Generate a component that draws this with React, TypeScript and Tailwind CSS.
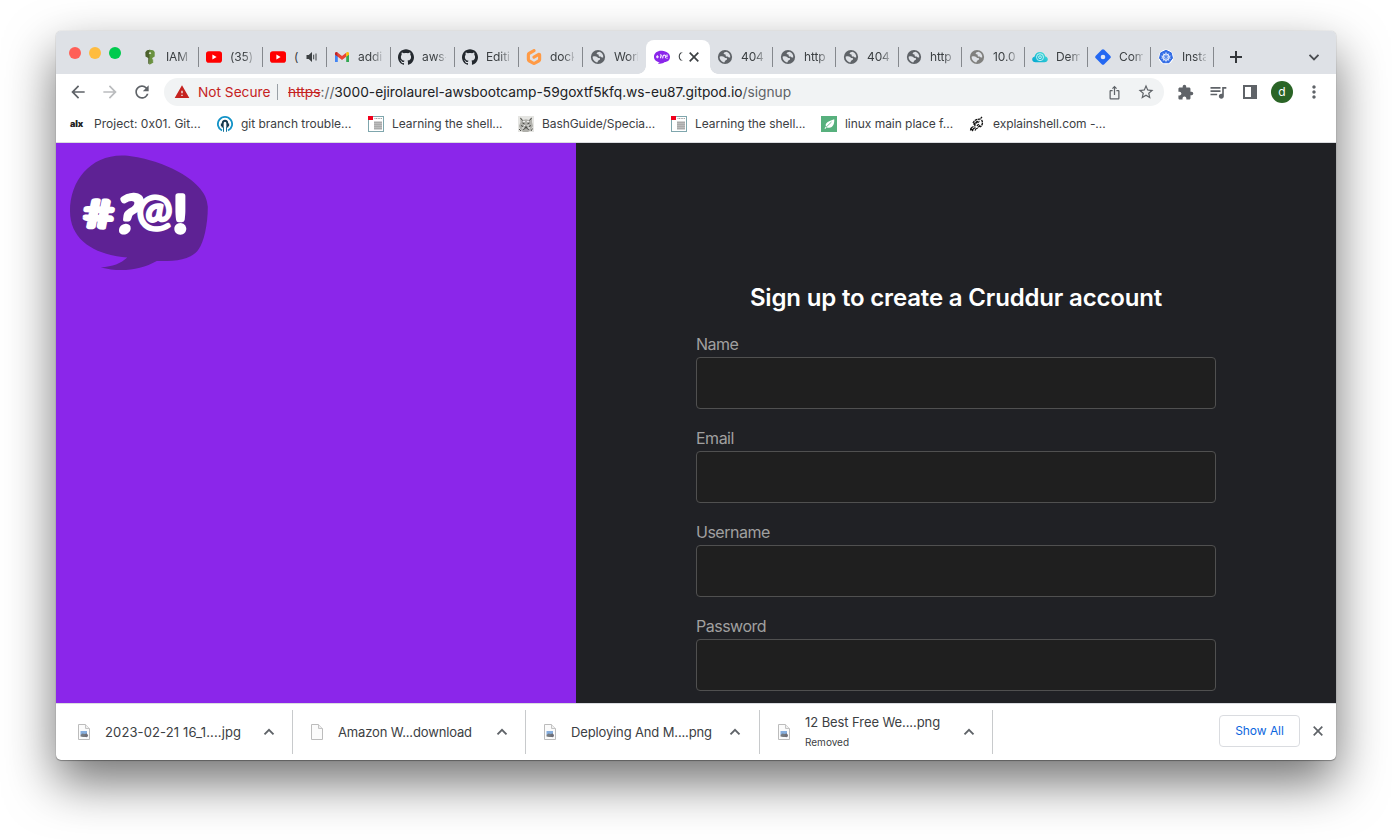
import React from "react";
import {
  MdArrowBack, MdArrowForward, MdRefresh, MdWarning, MdIosShare, MdStarBorder,
  MdExtension, MdQueueMusic, MdMoreVert,
} from "react-icons/md";
import { SiGithub, SiGitpod } from "react-icons/si";

type IconProps = { className?: string };

const Globe = ({ className = "text-[#5f6368]" }: IconProps) => (
  <svg viewBox="0 0 16 16" className={`size-4 ${className}`}>
    <circle cx="8" cy="8" r="7.100" fill="currentColor" />
    <path d="M2.600 7.800c1.500-.6 3.500-.6 4.500.2.600.5.700 1 1.700 1 .9 0 1.400.5 1.200 1.300-.2.800-1 .8-1.600 1.300-.6.600-.5 1.100-1.100 1.900C4.800 13.100 2.600 10.900 2.600 7.800z" fill="#dee1e6" />
    <path d="M9.300 2.800c-.9.200-2 .6-2.500 1.300-.4.600 0 1.100.7 1.200.9.100 1.200.5 1.200 1.100 0 .8.500 1.200 1.300 1.200.9 0 1 .6 1.800.8.500.1 1 0 1.500-.2C13.300 5.500 11.900 3.400 9.300 2.800z" fill="#dee1e6" />
  </svg>
);

const YouTube = () => (
  <svg viewBox="0 0 16 16" className="size-4">
    <rect x="0" y="2.300" width="16" height="11.400" rx="2.800" fill="#f00" />
    <path d="M6.400 5.600v4.800L10.600 8z" fill="#fff" />
  </svg>
);

const Gmail = () => (
  <svg viewBox="0 0 16 16" className="size-4">
    <path d="M1 5v8h2.800V7z" fill="#4285f4" />
    <path d="M15 5v8h-2.800V7z" fill="#34a853" />
    <path d="M3.800 3.800v4L8 11l4.200-3.200v-4L8 7z" fill="#ea4335" />
    <path d="M1 4.500v1.300l2.800 2V3.600C2.500 2.500 1 3 1 4.500z" fill="#c5221f" />
    <path d="M15 4.500v1.300l-2.800 2V3.600C13.500 2.500 15 3 15 4.500z" fill="#fbbc04" />
  </svg>
);

const IamKey = () => (
  <svg viewBox="0 0 16 16" className="size-4">
    <path d="M3.300 3.200 5 1.200 8 .8v8l-.4 6.700-1.400-1V9L3.500 7.400z" fill="#4b612c" />
    <path d="M7.500.8l3.700.5 1.500 1.700v4.500L10.300 9v1.200l1.300.9-1.100.9 1.100 1-1 1.100L8 15.500H7.500z" fill="#6a9140" />
    <path d="M6.700 4.200 8 3.100l1.300 1.100L8 5.200z" fill="#eef3e8" />
  </svg>
);

const ChatBubble = () => (
  <svg viewBox="0 0 16 16" className="size-4">
    <path d="M0 7.500C0 3.500 4 1.300 8 1.700c4.500.5 8 2.800 8 6.100 0 3.700-2.500 5-5.200 5.300-1.800 1.700-5 1.900-7 1.400l2-1.200C2.500 12.800-.2 10.800 0 7.500z" fill="#8b26ea" />
    <path d="M2 7.800h2.800M3.400 6.300v3M6 6c1.600-.5 1.600 1 .6 2v1.200M9 9.400c-.8-1.200.2-3.200 1.500-3.200s1.600 2 .7 2.800M13 5.500v2.800M13 9.300v.6" stroke="#f3e6ff" strokeWidth="1.200" fill="none" />
  </svg>
);

const Cloud = () => (
  <svg viewBox="0 0 16 16" className="size-4">
    <defs>
      <linearGradient id="cloud" x1="0" y1="1" x2="1" y2="0">
        <stop offset="0" stopColor="#00a5d0" />
        <stop offset="1" stopColor="#4fe3d8" />
      </linearGradient>
    </defs>
    <path d="M3.600 13.200C1.500 13.200.2 12 .2 10.500c0-1.500 1-2.500 2.400-2.900C3 5 5.200 3 8 3s4.900 1.900 5.300 4.600c1.500.3 2.500 1.400 2.500 2.900 0 1.600-1.400 2.700-3.400 2.700z" fill="url(#cloud)" />
    <circle cx="8" cy="8.200" r="3.500" fill="none" stroke="#e6f9fa" strokeWidth=".8" />
    <circle cx="8" cy="8.200" r="1.400" fill="none" stroke="#e6f9fa" strokeWidth=".8" />
  </svg>
);

const Diamond = () => (
  <svg viewBox="0 0 16 16" className="size-4">
    <rect x="2" y="2" width="12" height="12" rx="1.800" transform="rotate(45 8 8)" fill="#2468f2" />
    <circle cx="8" cy="8" r="2.300" fill="#dfe6f5" />
  </svg>
);

const Wheel = () => (
  <svg viewBox="0 0 16 16" className="size-4">
    <circle cx="8" cy="8" r="7.500" fill="#fff" />
    <path d="M8 1.300l5.200 2.500 1.300 5.400L11 13.700H5L1.500 9.200l1.300-5.400z" fill="#326ce5" stroke="#326ce5" strokeLinejoin="round" />
    <circle cx="8" cy="8.100" r="3.200" fill="none" stroke="#fff" strokeWidth="1" />
    <path d="M8 3v10.200M3.200 7l9.600 2.300M3.200 9.300 12.800 7M5 4.300l6 7.600M11 4.300 5 11.900" stroke="#fff" strokeWidth=".6" />
    <circle cx="8" cy="8.100" r="1" fill="#326ce5" />
  </svg>
);

const Gitpod = () => <SiGitpod className="size-4 text-[#ff9a45]" />;
const GitHub = () => <SiGithub className="size-4 text-[#24292f]" />;

const Speaker = () => (
  <svg viewBox="0 0 12 12" className="h-3 w-3">
    <path d="M.5 4h2.200L6 1v10L2.700 8H.5z" fill="#3c4043" />
    <path d="M7.700 3.700v4.600M10 2.500v7" stroke="#3c4043" strokeWidth="1" />
  </svg>
);

const Cross = ({ className = "" }: IconProps) => (
  <svg viewBox="0 0 10 10" className={`size-[10px] shrink-0 ${className}`}>
    <path d="M.7.700l8.600 8.600M9.300.700.700 9.300" stroke="currentColor" strokeWidth="1.700" />
  </svg>
);

const Plus = ({ className = "" }: IconProps) => (
  <svg viewBox="0 0 12 12" className={`size-3 shrink-0 ${className}`}>
    <path d="M6 0v12M0 6h12" stroke="currentColor" strokeWidth="2" />
  </svg>
);

const Chevron = ({ up, className = "" }: { up?: boolean; className?: string }) => (
  <svg viewBox="0 0 12 12" className={`size-3 shrink-0 ${className}`}>
    <path d={up ? "M1.500 8.300 6 3.800l4.500 4.500" : "M1.500 3.800 6 8.300l4.500-4.500"} fill="none" stroke="currentColor" strokeWidth="1.900" />
  </svg>
);

type TabInfo = { title: string; icon: React.ReactNode; wide?: boolean; active?: boolean; audio?: boolean; beforeActive?: boolean };

const tabs: TabInfo[] = [
  { title: "IAM", icon: <IamKey />, wide: true },
  { title: "(35)", icon: <YouTube />, wide: true },
  { title: "(", icon: <YouTube />, wide: true, audio: true },
  { title: "addi", icon: <Gmail />, wide: true },
  { title: "aws-", icon: <GitHub />, wide: true },
  { title: "Editi", icon: <GitHub />, wide: true },
  { title: "dock", icon: <Gitpod />, wide: true },
  { title: "Worl", icon: <Globe />, beforeActive: true },
  { title: "C", icon: <ChatBubble />, wide: true, active: true },
  { title: "404", icon: <Globe /> },
  { title: "http", icon: <Globe /> },
  { title: "404", icon: <Globe /> },
  { title: "http", icon: <Globe /> },
  { title: "10.0", icon: <Globe className="text-[#80807e]" /> },
  { title: "Dem", icon: <Cloud /> },
  { title: "Com", icon: <Diamond /> },
  { title: "Insta", icon: <Wheel /> },
];

function Tab({ tab }: { tab: TabInfo }) {
  if (tab.active) {
    return (
      <div className="relative mt-2 flex h-[34px] w-16 items-center rounded-t-lg bg-white pl-2">
        <span className="absolute bottom-0 -left-2 size-2 bg-[radial-gradient(circle_at_0_0,transparent_7.500px,#fff_8px)]" />
        <span className="absolute -right-2 bottom-0 size-2 bg-[radial-gradient(circle_at_100%_0,transparent_7.500px,#fff_8px)]" />
        {tab.icon}
        <span className="ml-2 w-[5px] overflow-hidden text-[#3c4043] [mask-image:linear-gradient(90deg,#000_50%,transparent)]">{tab.title}</span>
        <Cross className="ml-[6px] text-[#3c4043]" />
      </div>
    );
  }
  return (
    <div className={`mt-2 flex h-[34px] items-center pl-[7px] ${tab.wide ? "w-16" : "w-[63px]"}`}>
      <span className="shrink-0">{tab.icon}</span>
      {tab.audio ? (
        <>
          <span className="ml-2 w-[12px] text-[#3c4043]">{tab.title}</span>
          <Speaker />
          <span className="grow" />
        </>
      ) : (
        <span className="ml-2 grow basis-0 whitespace-pre text-[#3c4043]">
          <span className="block w-6 overflow-hidden tracking-[-0.1px] [mask-image:linear-gradient(90deg,#000_55%,rgba(0,0,0,0.2))]">{tab.title}</span>
        </span>
      )}
      {!tab.beforeActive && <span className="h-5 w-px shrink-0 bg-[#85888d]" />}
    </div>
  );
}

const PageIcon = () => (
  <svg viewBox="0 0 16 16" className="size-4">
    <rect x=".5" y=".5" width="15" height="15" fill="#fff" stroke="#7fa6ad" />
    <rect x="0" y="0" width="5" height="4" fill="#f0001c" />
    <path d="M6.500 2.500h7.500" stroke="#999" strokeDasharray="1 .6" />
    <path d="M6 5.500h8v8H6z" fill="#aaa" />
    <path d="M6 7.500h8M6 9.500h8M6 11.500h8" stroke="#c4c4c4" strokeWidth=".7" />
  </svg>
);

const Bobcat = () => (
  <svg viewBox="0 0 16 16" className="size-4">
    <rect width="16" height="16" fill="#e5e5e2" />
    <path d="M2 1l3 3 3-.8 3 .8 3-3v5l1 4-2 4-3 2H5l-3-3-1-3 1.500-4z" fill="#b0b0ab" />
    <path d="M2.500 2l2 2.500M13.500 2l-2 2.500M4.500 7l2 .8M11.500 7l-2 .8M7 11h2l-1 1.500zM3 9.500l2 1M13 9.500l-2 1M5 13.500l2-1M11 13.500l-2-1M1 13l2 2M14.500 12.500 13 15" stroke="#3b3b38" strokeWidth=".9" fill="none" />
    <path d="M5 5.500h2M9 5.500h2M6 9.500h1M9.500 9.500h1M4 12h2M10 12h2" stroke="#eee" />
  </svg>
);

const Kraken = () => (
  <svg viewBox="0 0 16 16" className="size-4">
    <path d="M5 14.500A7.100 7.100 0 1 1 11 14.500" fill="none" stroke="#1493c7" strokeWidth="1.800" />
    <path d="M5.700 11.600V7.400a2.300 2.600 0 0 1 4.600 0v4.200" fill="none" stroke="#173a4e" strokeWidth="1.900" />
    <path d="M4.500 7.500v2.800M11.500 7.500v2.800" stroke="#173a4e" strokeWidth="1.300" />
    <path d="M6.500 11v4.800M9.500 11v4.800" stroke="#1a6f96" strokeWidth="1" />
  </svg>
);

const Leaf = () => (
  <svg viewBox="0 0 16 16" className="size-4">
    <rect width="16" height="16" fill="#57b07d" />
    <path d="M13.200 3.200c.4 4-1 8.300-5 8.600-1 .1-1.900-.1-2.500-.6l-1.500 1.700-.7-.6 1.500-1.800C3.500 7 7.500 5 13.200 3.200z" fill="#fff" />
    <path d="M5 11.200 10.500 6" stroke="#57b07d" strokeWidth=".8" />
  </svg>
);

const Shell = () => (
  <svg viewBox="0 0 16 16" className="size-4">
    <path d="M4 7C5.500 3.500 9 3 11 3.200l2-2.300M4.500 8.500c2-2.500 4-3.500 6-3M6 10.500c-.8-3 1.500-4.500 4-4M8 10c1-2 3-1.500 2.500 0-.3 1-1.500 1-2 .5M12.500 4c1.800 2 1 5.500-1.500 7" stroke="#111" strokeWidth="1.300" strokeDasharray="2.600 .5" fill="none" />
    <path d="M1.500 14.500c0-2 1.500-3.500 3-4M3.500 15c0-1.500 1.500-3 3-3.500M6 14.500c.5-1.500 1.500-2.500 3-2.500M1.500 12l2.500 3" stroke="#111" strokeWidth="1.200" fill="none" />
  </svg>
);

const Alx = () => <span className="block w-4 text-[9px] leading-4 font-black tracking-[-0.100px] text-[#222]">alx</span>;

const bookmarks = [
  { label: "Project: 0x01. Git...", icon: <Alx />, box: "w-[147px]", track: "tracking-[0.020px]" },
  { label: "git branch trouble...", icon: <Kraken />, box: "w-[151px]", track: "tracking-[-0.020px]" },
  { label: "Learning the shell...", icon: <PageIcon />, box: "w-[150px]", track: "tracking-[-0.030px]" },
  { label: "BashGuide/Specia...", icon: <Bobcat />, box: "w-[153px]", track: "tracking-[-0.080px]" },
  { label: "Learning the shell...", icon: <PageIcon />, box: "w-[150px]", track: "tracking-[-0.030px]" },
  { label: "linux main place f...", icon: <Leaf />, box: "w-[148px]", track: "tracking-[-0.040px]" },
  { label: "explainshell.com -...", icon: <Shell />, box: "w-[150px]", track: "tracking-[-0.060px]" },
];

const FileIcon = ({ image }: { image?: boolean }) => (
  <svg viewBox="0 0 12 16" className="h-4 w-3 shrink-0">
    <path d="M.5.500h7l4 4v11H.5z" fill="#fbfbfb" stroke="#bcbcbc" />
    <path d="M7.500.500v4h4" fill="#eee" stroke="#c4c4c4" />
    {image && (
      <>
        <rect x="2.500" y="7" width="6.500" height="4" fill="#86aede" />
        <path d="M2.500 11l2-1.500 2 .5 2.500-.5V12l-1 1H5l-2.500-.5z" fill="#777b80" />
        <circle cx="8.300" cy="11.500" r="1.700" fill="#6e6e78" />
      </>
    )}
  </svg>
);

const downloads = [
  { name: "2023-02-21 16_1....jpg", image: true, box: "w-[237px] pl-[22px]", track: "tracking-[0.130px]" },
  { name: "Amazon W...download", image: false, box: "w-[233px] pl-[18px]", track: "tracking-[-0.150px]" },
  { name: "Deploying And M....png", image: true, box: "w-[234px] pl-[18px]", track: "tracking-[-0.140px]" },
  { name: "12 Best Free We....png", image: true, note: "Removed", box: "w-[233px] pl-[18px]", track: "tracking-[-0.080px]" },
];

const Logo = () => (
  <svg viewBox="0 0 140 118" className="h-[118px] w-[140px]">
    <path
      d="M0 58C0 28 20 2.500 52 2.500 82 3 138 25 137.800 54c0 18-4 35-9 42-8 12-25 12-42 12-16 9-36 11.500-56 6.500 12-1 20-4 26.500-10C26 102 0 88 0 58z"
      fill="#5e2294"
    />
    <g fill="#fff" stroke="#fff" strokeLinejoin="round" className="font-['Lato'] font-normal">
      <text x="0" y="0" fontSize="38" strokeWidth="4" transform="translate(14.500 74) rotate(2) skewX(6) scale(1.380 1)">#</text>
      <text x="0" y="0" fontSize="51" strokeWidth="4.500" transform="translate(43.500 78.500) skewX(-12) scale(1.050 1)">?</text>
      <text x="0" y="0" fontSize="43" strokeWidth="3" transform="translate(67.500 73.500) rotate(-4)">@</text>
      <text x="0" y="0" fontSize="51" strokeWidth="5.500" transform="translate(103.500 78.500)">!</text>
    </g>
  </svg>
);

export default function App() {
  return (
    <div className="h-[840px] w-[1392px] overflow-hidden bg-white px-14 pt-[31px] font-['Inter',sans-serif] text-xs">
      <div className="flex h-[729px] w-[1280px] flex-col overflow-hidden rounded-[5px] bg-white shadow-[0_0_1px_0_rgba(0,0,0,0.300),0_1px_1px_0_rgba(0,0,0,0.300),0_22px_50px_rgba(0,0,0,0.560)]">
        <div className="flex h-[43px] shrink-0 bg-[#dee1e6]">
          <div className="flex w-[79px] items-center gap-2 pl-[13px]">
            <span className="size-3 rounded-full bg-[#ff5f57]" />
            <span className="size-3 rounded-full bg-[#febc40]" />
            <span className="size-3 rounded-full bg-[#00ca4e]" />
          </div>
          <div className="flex pt-px">
            {tabs.map((tab, i) => <Tab key={i} tab={tab} />)}
          </div>
          <Plus className="mt-5 ml-4 text-[#33363a]" />
          <Chevron className="mt-5 mr-4 ml-auto text-[#4a4d51]" />
        </div>

        <div className="flex h-[34px] shrink-0 items-center pt-[2px] text-[#5f6368]">
          <MdArrowBack className="ml-3 size-5" />
          <MdArrowForward className="ml-3 size-5 text-[#babcbe]" />
          <MdRefresh className="ml-3 size-5" />
          <div className="ml-3 flex h-7 w-[1000px] items-center rounded-full bg-[#f1f3f4] pl-[10px] text-sm">
            <MdWarning className="size-4 text-[#c5221f]" />
            <span className="ml-2 w-[79px] pt-px text-[13.700px] whitespace-nowrap text-[#c5221f]">Not Secure</span>
            <span className="h-4 w-px bg-[#9aa0a6]" />
            <span className="ml-[10px] grow pt-px text-[13.750px] whitespace-nowrap">
              <span className="text-[#c5221f] line-through">https</span>
              <span>://</span>
              <span className="text-[#202124]">3000-ejirolaurel-awsbootcamp-59goxtf5kfq.ws-eu87.gitpod.io</span>
              <span>/signup</span>
            </span>
            <MdIosShare className="size-[15px]" />
            <MdStarBorder className="mr-[9px] ml-[15px] size-[18px]" />
          </div>
          <MdExtension className="ml-[13px] size-[17px]" />
          <MdQueueMusic className="ml-[14px] size-5" />
          <svg viewBox="0 0 14 14" className="ml-[15px] size-[14px]">
            <path d="M0 0h14v14H0zM2 2v10h6V2z" fill="currentColor" fillRule="evenodd" />
          </svg>
          <span className="ml-[14px] flex size-[22px] items-center justify-center rounded-full bg-[#2a6426] text-xs text-white">d</span>
          <MdMoreVert className="ml-[11px] size-5" />
        </div>

        <div className="flex h-[35px] shrink-0 items-center border-b border-[#dadce0] pb-[2px] pl-[14px] text-[#3c4043]">
          {bookmarks.map((b, i) => (
            <div key={i} className={`flex shrink-0 items-center gap-2 ${b.box}`}>
              <span className="shrink-0">{b.icon}</span>
              <span className={`whitespace-nowrap ${b.track}`}>{b.label}</span>
            </div>
          ))}
        </div>

        <main className="flex h-[560px] shrink-0">
          <section className="w-[520px] bg-[#8b26ea] pt-[10px] pl-[14px]">
            <Logo />
          </section>
          <section className="flex grow flex-col items-center bg-[#202125]">
            <form className="mt-[140px] w-[520px]">
              <h1 className="mb-[19px] text-center text-[24px] leading-[30px] font-semibold tracking-[-0.170px] whitespace-nowrap text-white">
                Sign up to create a Cruddur account
              </h1>
              {["Name", "Email", "Username", "Password"].map((field) => (
                <label key={field} className="mb-[17px] block">
                  <span className="block h-[25px] pt-[2px] text-base leading-5 tracking-[-0.500px] text-[#a0a0a0]">{field}</span>
                  <input className="block h-[52px] w-full rounded border border-[#505050] bg-[#1f1f1f] px-3 text-white outline-none" />
                </label>
              ))}
            </form>
          </section>
        </main>

        <footer className="flex h-[57px] shrink-0 items-center border-t border-[#dadce0] text-[#3c4043]">
          {downloads.map((d) => (
            <div key={d.name} className={`flex h-11 shrink-0 items-center border-r border-[#c8cacc] ${d.box}`}>
              <FileIcon image={d.image} />
              <div className="ml-[15px] w-[158px] whitespace-nowrap">
                <div className={`text-[13px] leading-5 ${d.track}`}>{d.name}</div>
                {d.note && <div className="text-[10px] leading-5">{d.note}</div>}
              </div>
              <Chevron up className="text-[#5f6368]" />
            </div>
          ))}
          <button className="mb-[2px] ml-auto h-8 w-[81px] rounded border border-[#dadce0] text-xs tracking-[-0.050px] text-[#0b66de]">Show All</button>
          <Cross className="mr-[13px] mb-[2px] ml-[13px] text-[#5f6368]" />
        </footer>
      </div>
    </div>
  );
}
